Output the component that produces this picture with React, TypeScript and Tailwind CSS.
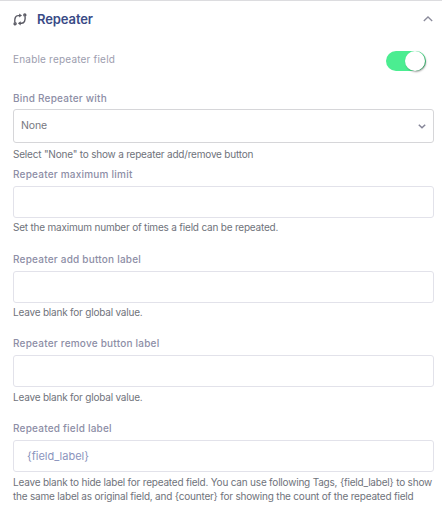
import { useState } from "react";

interface IField {
  label: string;
  help: string;
  value?: string;
  className: string;
  inputClass: string;
}

const fields: IField[] = [
  {
    label: "Repeater maximum limit",
    help: "Set the maximum number of times a field can be repeated.",
    className: "mt-1.5",
    inputClass: "mb-0.5",
  },
  {
    label: "Repeater add button label",
    help: "Leave blank for global value.",
    className: "mt-[18px]",
    inputClass: "mb-0.5",
  },
  {
    label: "Repeater remove button label",
    help: "Leave blank for global value.",
    className: "mt-[17px]",
    inputClass: "mb-[3px]",
  },
  {
    label: "Repeated field label",
    help: "Leave blank to hide label for repeated field. You can use following Tags, {field_label} to show the same label as original field, and {counter} for showing the count of the repeated field",
    value: "{field_label}",
    className: "mt-[17px]",
    inputClass: "mb-[3px]",
  },
];

const RepeaterIcon = () => (
  <svg width="14" height="13" viewBox="0 0 14 13" fill="none" stroke="#5a5a64" strokeWidth="1.4">
    <circle cx="2.1" cy="10.8" r="1" />
    <circle cx="11.8" cy="2" r="1" />
    <path d="M1.8 9.3C1.4 5.2 2.6 2.6 5.2 2.6H7" />
    <path d="M12.1 3.5C12.5 7.6 11.3 10.2 8.7 10.2H7" />
    <path d="M6.2 0.4L9 2.6L6.2 4.6Z" fill="#5a5a64" stroke="none" />
    <path d="M7.7 8.2L4.9 10.2L7.7 12.4Z" fill="#5a5a64" stroke="none" />
  </svg>
);

const Label = ({ text }: { text: string }) => (
  <label className="block text-[10px] leading-[14px] font-medium tracking-[0.22px] whitespace-nowrap text-[#8d8ea6]">
    {text}
  </label>
);

const Help = ({ text }: { text: string }) => (
  <p className="-mr-1 text-[10px] leading-[14px] tracking-[-0.2px] text-[#6f737b]">{text}</p>
);

const Field = ({ label, help, value, className, inputClass }: IField) => (
  <div className={className}>
    <Label text={label} />
    <input
      defaultValue={value}
      className={`mt-[5px] block h-8 w-full rounded-[3px] border border-[#e2e2ea] bg-white px-[13px] text-[11px] text-[#8b94bd] outline-none ${inputClass}`}
    />
    <Help text={help} />
  </div>
);

export default function App() {
  const [enabled, setEnabled] = useState(true);

  return (
    <div className="h-[512px] w-[442px] overflow-hidden border-t border-[#dcdcdf] bg-white pr-2 pl-[13px] font-['Inter',sans-serif]">
      <div className="flex h-9 items-center">
        <RepeaterIcon />
        <h2 className="ml-2.5 text-[13px] leading-5 font-semibold tracking-[-0.1px] text-[#394a86]">Repeater</h2>
        <svg className="mr-px ml-auto" width="10" height="6" viewBox="0 0 10 6" fill="none" stroke="#8b8b9b" strokeWidth="1.3">
          <path d="M0.8 5L5 1L9.2 5" />
        </svg>
      </div>

      <div className="flex h-12 items-center justify-between">
        <span className="mb-[5px] text-[10px] leading-[14px] tracking-[0.2px] text-[#9c9dae]">Enable repeater field</span>
        <button
          onClick={() => setEnabled(!enabled)}
          className={`mr-2 flex h-5 w-10 items-center rounded-full ${enabled ? "justify-end bg-[#4bed91]" : "justify-start bg-gray-300"}`}
        >
          <span className="mr-px h-5 w-5 rounded-full bg-white shadow-[1px_1px_2px_rgba(0,0,0,0.4)]" />
        </button>
      </div>

      <div className="mt-1.5">
        <Label text="Bind Repeater with" />
        <div className="mt-1 mb-1 flex h-[34px] items-center justify-between rounded-[3px] border border-[#d6d6d9] px-[7px]">
          <span className="text-[10.5px] leading-[14px] tracking-[-0.1px] text-[#777780]">None</span>
          <svg width="8" height="5" viewBox="0 0 8 5" fill="none" stroke="#858598" strokeWidth="1.5">
            <path d="M0.8 0.8L4 3.8L7.2 0.8" />
          </svg>
        </div>
        <Help text={'Select "None" to show a repeater add/remove button'} />
      </div>

      {fields.map((field) => (
        <Field key={field.label} {...field} />
      ))}
    </div>
  );
}
